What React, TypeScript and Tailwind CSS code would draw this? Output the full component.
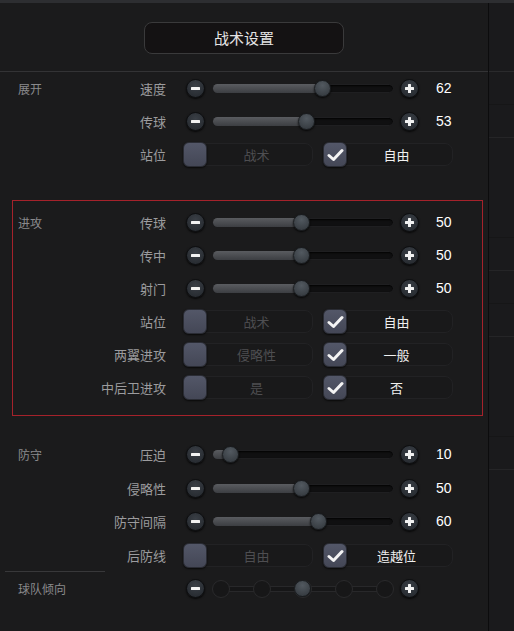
import React from 'react'

type SliderRow = { kind: 'slider'; label: string; value: number }
type ToggleRow = { kind: 'toggle'; label: string; off: string; on: string }
type RowData = SliderRow | ToggleRow

const font = { fontFamily: '"Noto Sans CJK SC", "Noto Sans", sans-serif' }

function RoundBtn({ plus }: { plus?: boolean }) {
  return (
    <div className="relative w-[19px] h-[19px] shrink-0 rounded-full bg-[radial-gradient(circle_at_50%_35%,#3a3f46,#22262b)] border border-[#0d0e10] shadow-[0_1px_2px_rgba(0,0,0,0.8)] flex items-center justify-center">
      <svg width="11" height="11" viewBox="0 0 11 11">
        <rect x="1" y="4" width="9" height="3" rx="0.5" fill="#f2f2f2" />
        {plus && <rect x="4" y="1" width="3" height="9" rx="0.5" fill="#f2f2f2" />}
      </svg>
    </div>
  )
}

function Track({ value }: { value: number }) {
  // thumb centre measured off the reference: ~1.77px per point
  const center = Math.max(9, value * 1.77)
  return (
    <div className="relative w-[182px] h-[9px] shrink-0 rounded-full bg-[#101011] border border-[#1f1f21] shadow-[inset_0_1px_2px_rgba(0,0,0,0.9)]">
      <div
        className="absolute left-0 top-[-1px] h-[9px] rounded-full bg-[linear-gradient(#5a5c60,#3c3e42)]"
        style={{ width: center }}
      />
      <div
        className="absolute top-[-5px] w-[17px] h-[17px] rounded-full bg-[radial-gradient(circle_at_50%_30%,#525960,#30353a)] border border-[#1a1d20] shadow-[0_1px_2px_rgba(0,0,0,0.8)]"
        style={{ left: center - 9 }}
      />
    </div>
  )
}

function NotchTrack() {
  const stops = [0, 1, 2, 3, 4]
  return (
    <div className="relative w-[182px] h-[19px] shrink-0 flex items-center">
      <div className="absolute left-[8px] right-[8px] h-[6px] bg-[#161617] border-y border-[#28282a]" />
      {stops.map(i => (
        <div
          key={i}
          className="absolute w-[18px] h-[18px] rounded-full bg-[#171718] border border-[#2a2a2c]"
          style={{ left: i * 41 }}
        />
      ))}
      <div
        className="absolute w-[17px] h-[17px] rounded-full bg-[radial-gradient(circle_at_50%_30%,#525960,#30353a)] border border-[#1a1d20]"
        style={{ left: 2 * 41 }}
      />
    </div>
  )
}

function Check({ checked }: { checked?: boolean }) {
  return (
    <div className="w-[24px] h-[25px] shrink-0 rounded-[6px] bg-[linear-gradient(#535768,#444756)] border border-[#2a2c34] shadow-[0_1px_2px_rgba(0,0,0,0.7)] flex items-center justify-center">
      {checked && (
        <svg width="17" height="14" viewBox="0 0 17 14">
          <path d="M2 7.5 L6.5 11.5 L15 2.5" fill="none" stroke="#f4f4f4" strokeWidth="3" strokeLinecap="round" strokeLinejoin="round" />
        </svg>
      )}
    </div>
  )
}

function Option({ text, checked }: { text: string; checked?: boolean }) {
  return (
    <div className="relative w-[130px] h-[23px] flex items-center rounded-[8px] border border-[#222224] bg-[#19191a]">
      <div className="-ml-[1px]">
        <Check checked={checked} />
      </div>
      <div className={`flex-1 text-center pr-[6px] text-[13px] ${checked ? 'text-[#f0f0f0]' : 'text-[#4e4e51]'}`}>{text}</div>
    </div>
  )
}

function Row({ section, row }: { section?: string; row: RowData }) {
  return (
    <div className="flex items-center h-[33px]">
      <div className="w-[60px] pl-[18px] text-[12px] text-[#8a8a8c] shrink-0">{section}</div>
      <div className="w-[106px] text-right text-[13px] text-[#9c9c9e] shrink-0 whitespace-nowrap">{row.label}</div>
      {row.kind === 'slider' ? (
        <div className="flex items-center ml-[20px]">
          <RoundBtn />
          <div className="ml-[7px]">
            <Track value={row.value} />
          </div>
          <div className="ml-[6px]">
            <RoundBtn plus />
          </div>
          <div className="ml-[17px] text-[14px] text-white" style={{ fontFamily: '"Liberation Sans", Arial, sans-serif' }}>{row.value}</div>
        </div>
      ) : (
        <div className="flex items-center gap-[10px] ml-[17px]">
          <Option text={row.off} />
          <Option text={row.on} checked />
        </div>
      )}
    </div>
  )
}

const expand: RowData[] = [
  { kind: 'slider', label: '速度', value: 62 },
  { kind: 'slider', label: '传球', value: 53 },
  { kind: 'toggle', label: '站位', off: '战术', on: '自由' },
]

const attack: RowData[] = [
  { kind: 'slider', label: '传球', value: 50 },
  { kind: 'slider', label: '传中', value: 50 },
  { kind: 'slider', label: '射门', value: 50 },
  { kind: 'toggle', label: '站位', off: '战术', on: '自由' },
  { kind: 'toggle', label: '两翼进攻', off: '侵略性', on: '一般' },
  { kind: 'toggle', label: '中后卫进攻', off: '是', on: '否' },
]

const defend: RowData[] = [
  { kind: 'slider', label: '压迫', value: 10 },
  { kind: 'slider', label: '侵略性', value: 50 },
  { kind: 'slider', label: '防守间隔', value: 60 },
  { kind: 'toggle', label: '后防线', off: '自由', on: '造越位' },
]

export default function App() {
  return (
    <div className="w-[514px] h-[631px] bg-[#1b1b1c] flex flex-col overflow-hidden" style={font}>
      <div className="h-[3px] bg-[#2d2e31] shrink-0" />
      <div className="flex flex-1">
        {/* main panel */}
        <div className="w-[489px] border-r border-[#0c0c0d] flex flex-col">
          <div className="h-[69px] flex items-start justify-center pt-[19px] border-b border-[#333335]">
            <div className="w-[200px] h-[32px] rounded-[8px] bg-[#141213] border border-[#3a3a3b] flex items-center justify-center text-[15px] text-[#e4e4e4]">
              战术设置
            </div>
          </div>

          {expand.map((r, i) => (
            <Row key={i} section={i === 0 ? '展开' : undefined} row={r} />
          ))}

          <div className="mt-[29px] ml-[12px] w-[471px] h-[216px] border border-[#a5222b] pt-[5px]">
            <div className="-ml-[13px]">
              {attack.map((r, i) => (
                <Row key={i} section={i === 0 ? '进攻' : undefined} row={r} />
              ))}
            </div>
          </div>

          <div className="mt-[22px]">
            {defend.map((r, i) => (
              <div key={i} className="h-[33.6px] flex items-center">
                <Row section={i === 0 ? '防守' : undefined} row={r} />
              </div>
            ))}
          </div>

          <div className="w-[100px] border-t border-[#38383a] mt-[-1px] ml-[5px]" />

          <div className="flex items-center h-[33px]">
            <div className="w-[166px] pl-[18px] text-[12px] text-[#8a8a8c] shrink-0">球队倾向</div>
            <div className="flex items-center ml-[20px]">
              <RoundBtn />
              <div className="ml-[7px]">
                <NotchTrack />
              </div>
              <div className="ml-[6px]">
                <RoundBtn plus />
              </div>
            </div>
          </div>
        </div>

        {/* right strip */}
        <div className="flex-1 flex flex-col bg-[#1a1a1c]">
          <div className="h-[69px] border-b border-[#2a2a2c]" />
          <div className="h-[33px] border-b border-[#161617]" />
          <div className="h-[33px] border-b border-[#252527]" />
          <div className="h-[100px] border-b border-[#161617]" />
          <div className="h-[33px] border-b border-[#252527]" />
          <div className="h-[33px] border-b border-[#161617]" />
          <div className="h-[33px] border-b border-[#252527]" />
          <div className="h-[100px] border-b border-[#161617]" />
          <div className="h-[33px] border-b border-[#252527]" />
          <div className="flex-1" />
        </div>
      </div>
    </div>
  )
}
